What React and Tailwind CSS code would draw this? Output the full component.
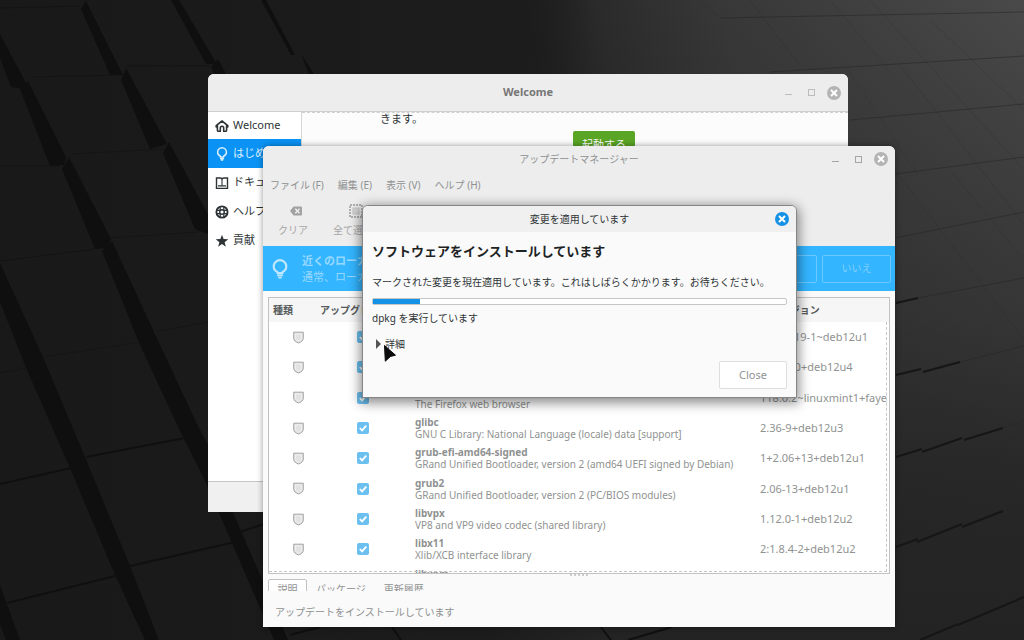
import { useState } from "react";
import clsx from "clsx";

const NAV = [
  { id: "welcome", label: "Welcome", icon: HomeIcon },
  { id: "first", label: "はじめに", icon: BulbIcon },
  { id: "docs", label: "ドキュメント", icon: BookIcon },
  { id: "help", label: "ヘルプ", icon: BuoyIcon },
  { id: "contribute", label: "貢献", icon: StarIcon },
];

const MENUS = ["ファイル (F)", "編集 (E)", "表示 (V)", "ヘルプ (H)"];

const UPDATES = [
  { name: "bind9", summary: "Internet Domain Name Server", version: "1:9.18.19-1~deb12u1" },
  { name: "cups", summary: "Common UNIX Printing System", version: "2.4.2-10+deb12u4" },
  { name: "firefox", summary: "The Firefox web browser", version: "118.0.2~linuxmint1+faye" },
  { name: "glibc", summary: "GNU C Library: National Language (locale) data [support]", version: "2.36-9+deb12u3" },
  { name: "grub-efi-amd64-signed", summary: "GRand Unified Bootloader, version 2 (amd64 UEFI signed by Debian)", version: "1+2.06+13+deb12u1" },
  { name: "grub2", summary: "GRand Unified Bootloader, version 2 (PC/BIOS modules)", version: "2.06-13+deb12u1" },
  { name: "libvpx", summary: "VP8 and VP9 video codec (shared library)", version: "1.12.0-1+deb12u2" },
  { name: "libx11", summary: "Xlib/XCB interface library", version: "2:1.8.4-2+deb12u2" },
  { name: "libxpm", summary: "X11 pixmap library", version: "1:3.5.12-1.1+deb12u1" },
];

function HomeIcon() {
  return (
    <svg viewBox="0 0 14 14" className="size-[14px]" fill="none" stroke="currentColor" strokeWidth="1.6" strokeLinejoin="round" strokeLinecap="round">
      <path d="M1.200 8V6.600L7 2l5.800 4.600V8M2.400 6.400v4.800c0 .8.500 1.100 1.100 1.100h1.800M11.600 6.400v4.800c0 .8-.5 1.100-1.100 1.100H8.700" />
      <path d="M5.300 12.300V9c0-1 .7-1.700 1.700-1.700S8.700 8 8.700 9v3.300" />
    </svg>
  );
}

function BulbIcon({ className = "size-[14px]" }) {
  return (
    <svg viewBox="0 0 14 14" className={className} fill="none" stroke="currentColor" strokeWidth="1.5">
      <path d="M5.200 9.900V9C3.700 8.300 2.600 7.200 2.600 5.200a4.400 4.400 0 0 1 8.800 0c0 2-1.100 3.100-2.600 3.800v.9z" strokeLinejoin="round" />
      <path d="M5 11.500h4M5.800 13h2.400" strokeWidth="1.300" />
    </svg>
  );
}

function BookIcon() {
  return (
    <svg viewBox="0 0 14 14" className="size-[14px]" fill="none" stroke="currentColor" strokeWidth="1.4">
      <path d="M1.500 12V2h3.700C6.300 2 7 2.600 7 3.400 7 2.600 7.700 2 8.800 2h3.700v10" />
      <path d="M7 3v7" strokeWidth="1.100" />
      <path d="M3 9.800h8M.8 12.300h12.400" strokeWidth="1.300" />
    </svg>
  );
}

function BuoyIcon() {
  return (
    <svg viewBox="0 0 14 14" className="size-[14px]" fill="none" stroke="currentColor">
      <circle cx="7" cy="7" r="5.600" strokeWidth="1.900" />
      <circle cx="7" cy="7" r="2.300" strokeWidth="1.400" />
      <path d="M5.200 1.500v3.800M8.800 1.500v3.800M5.200 8.700v3.800M8.800 8.700v3.800M1.500 5.300h3.700M1.500 8.700h3.700M8.800 5.300h3.700M8.800 8.700h3.700" strokeWidth="1.200" />
    </svg>
  );
}

function StarIcon() {
  return (
    <svg viewBox="0 0 14 14" className="size-[14px]" fill="currentColor">
      <path d="M7 .8l1.600 4.300 4.700.2-3.700 2.900 1.300 4.500L7 10.100l-3.900 2.600 1.300-4.500L.7 5.300l4.700-.2z" />
    </svg>
  );
}

function ShieldIcon() {
  return (
    <svg viewBox="0 0 12 14" className="mx-auto h-[13px] w-[11px]" fill="#e2e2e2" stroke="#9b9b9b" strokeWidth="1">
      <path d="M.8 1.200h10.400v6.600c0 2.600-2.200 4-5.200 5.200C3 11.800.8 10.400.8 7.800z" />
      <path d="M2.600 3h6.800v4.700c0 1.500-1.200 2.500-3.400 3.400-2.200-.9-3.400-1.900-3.400-3.400z" stroke="#f4f4f4" strokeWidth=".8" />
    </svg>
  );
}

function WindowControls({ active = false, dialog = false, className }) {
  return (
    <div className={clsx("flex items-center justify-end gap-[9px]", className)}>
      {!dialog && (
        <>
          <button type="button" aria-label="最小化" className="flex size-[14px] items-center justify-center">
            <span className="mt-1 h-px w-[7px] bg-current" />
          </button>
          <button type="button" aria-label="最大化" className="flex size-[14px] items-center justify-center">
            <span className="size-[7px] border border-current" />
          </button>
        </>
      )}
      <button
        type="button"
        aria-label="閉じる"
        className={clsx("flex size-[14px] items-center justify-center rounded-full text-white", active ? "bg-[#1592e6]" : "bg-[#b4b4b4]")}
      >
        <svg viewBox="0 0 8 8" className="size-2" stroke="currentColor" strokeWidth="2">
          <path d="M1 1l6 6M7 1L1 7" />
        </svg>
      </button>
    </div>
  );
}

function Wallpaper() {
  return (
    <svg viewBox="0 0 1024 640" preserveAspectRatio="xMidYMid slice" className="absolute inset-0 h-full w-full" aria-hidden="true">
      <defs>
        <linearGradient id="sheen" x1="530" y1="30" x2="1010" y2="-50" gradientUnits="userSpaceOnUse">
          <stop offset="0" stopColor="#1d1d1d" />
          <stop offset=".15" stopColor="#2b2b2b" />
          <stop offset=".4" stopColor="#383838" />
          <stop offset="1" stopColor="#494949" />
        </linearGradient>
        <linearGradient id="fade" x1="0" y1="0" x2="0" y2="1">
          <stop offset="0" stopColor="#242424" stopOpacity="0" />
          <stop offset=".25" stopColor="#242424" stopOpacity=".25" />
          <stop offset=".5" stopColor="#242424" stopOpacity=".5" />
          <stop offset=".75" stopColor="#242424" stopOpacity=".9" />
          <stop offset="1" stopColor="#232323" />
        </linearGradient>
        <linearGradient id="left" x1="0" y1="0" x2="1" y2="0">
          <stop offset="0" stopColor="#191919" />
          <stop offset=".48" stopColor="#1c1c1c" />
          <stop offset=".58" stopColor="#1c1c1c" stopOpacity="0" />
        </linearGradient>
      </defs>
      <rect width="1024" height="640" fill="url(#sheen)" />
      <rect width="1024" height="640" fill="url(#fade)" />
      <rect width="1024" height="640" fill="url(#left)" />
      <g fill="#0f0f0f">
        <path d="M86 1l37 74h-13L81 9z" />
        <path d="M126 68l41 76-17 5-29-69z" />
        <path d="M169 142l41 76v17l-15-6-32-76z" />
        <path d="M0 34l26 49-3 6-12-2L0 58z" />
        <path d="M28 81l38 76-2 8-14 1-30-77z" />
        <path d="M69 157l42 82-4 9-12 1-33-80z" />
        <path d="M112 241l42 91 43 92 13 25v42l-30-60-40-86-38-94z" />
        <path d="M171 0h8l38 64h-11z" />
        <path d="M218 59l8 15h-12l-3-7z" />
        <path d="M261 0h5l29 55h-4z" />
        <path d="M301 54l13 20h-5z" />
        <path d="M0 263l43 94 42 100 45 109 29 74h-14l-30-65-45-107-43-98-27-68z" />
        <path d="M0 585l20 55H6l-6-16z" />
        <path d="M203 445l35 79 50 116h-14l-45-104-26-60z" />
      </g>
      <g fill="none" stroke="#101010" strokeWidth="2">
        <path d="M0 484l80-18M86 457l104-20M130 566l105-24M7 603l112-28M240 532l24-8" />
        <path d="M600 626l11 14M628 640l44-13M392 627l9 13M290 635l30-8" />
      </g>
      <g fill="none" stroke="#121212" strokeOpacity=".7">
        <path d="M43 357l97-15M0 373l27-5M30 77l92-2M72 154l92-5M110 238l88-6M157 331l53-9M0 8l80-2M0 166h60M0 261l95-12M126 66h84" />
      </g>
      <g fill="none" stroke="#161616" strokeWidth="2">
        <path d="M896 303l22-5M896 375l25-6M923 372l37-10M896 457l26-8M922 452l40-14M964 440l39-12M896 547l22-8M917 542l45-18M962 527l41-16M920 640l38-16M958 625l66-28" />
      </g>
      <g fill="none" stroke="#262626" strokeOpacity=".55">
        <path d="M720 18l304-6M770 72l254-16M850 120l174-16M895 174l129-17M895 238l129-26M918 298l106-20M960 362l64-16M1003 428l21-7M1003 511l21-6" />
      </g>
      <g fill="none" stroke="#262626" strokeOpacity=".2">
        <path d="M700 0l20 18M750 0l50 66M830 0l60 72M870 0l154 170M930 20l94 90M848 70l70 105M900 65l124 160M895 170l129 170M950 170l74 90" />
      </g>
    </svg>
  );
}

function WelcomeWindow() {
  const [page, setPage] = useState("first");

  return (
    <section className="absolute top-[74px] left-[208px] flex h-[438px] w-[640px] flex-col overflow-hidden rounded-t-md bg-[#fcfcfc] text-[#2e3436]">
      <header className="grid h-[38px] shrink-0 grid-cols-[1fr_auto_1fr] items-center border-b border-[#cfcfcf] bg-[#ededed] px-[7px] text-[#777]">
        <h1 className="col-start-2 text-[11px] font-bold">Welcome</h1>
        <WindowControls className="text-[#bdbdbd]" />
      </header>
      <div className="flex flex-1">
        <nav className="w-[94px] border-r border-[#d6d6d6] bg-white">
          {NAV.map(({ id, label, icon: Icon }) => (
            <button
              key={id}
              type="button"
              onClick={() => setPage(id)}
              className={clsx(
                "flex h-[29px] w-full items-center gap-1 pl-[7px] text-[11px] whitespace-nowrap first:h-[27px]",
                page === id ? "bg-[#0a93f5] text-[#d9efff]" : "text-[#2e3436]"
              )}
            >
              <Icon />
              {label}
            </button>
          ))}
        </nav>
        <div className="flex-1 border-t border-dashed border-[#d0d0d0] pl-[78px]">
          <p className="text-[11px] leading-3">きます。</p>
          <button type="button" className="mt-[6px] ml-[193px] block h-7 w-[62px] rounded-xs bg-[#5ba526] text-[11px] text-white">
            起動する
          </button>
        </div>
      </div>
      <footer className="h-[31px] shrink-0 border-t border-[#c4c4c4] bg-[#f0f0f0]" />
    </section>
  );
}

function ToolButton({ label, children }) {
  return (
    <button type="button" disabled className="flex w-[60px] flex-col items-center gap-1 text-[10px] leading-4 text-[#a5a5a5]">
      <span className="pl-[6px]">{children}</span>
      {label}
    </button>
  );
}

function UpdateTable() {
  return (
    <div className="mx-[5px] mt-[6px] h-[277px] shrink-0 overflow-hidden border border-[#c2c2c2] bg-white">
      <div className="relative h-full overflow-hidden">
        <table className="h-[297px] w-full table-fixed text-left text-[#8f9291]">
          <thead>
            <tr className="h-6 bg-[#f6f6f6] text-[10px] text-[#555a5a]">
              <th className="w-[49px] pl-1">種類</th>
              <th className="w-[93px] pl-[2px] whitespace-nowrap">アップグレード</th>
              <th className="w-[345px] pl-1">名前</th>
              <th className="pl-1">新バージョン</th>
            </tr>
          </thead>
          <tbody className="leading-3">
            {UPDATES.map((u) => (
              <tr key={u.name}>
                <td className="pl-[9px]">
                  <ShieldIcon />
                </td>
                <td className="pr-1">
                  <label className="relative mx-auto block size-[12px]">
                    <input type="checkbox" defaultChecked aria-label={u.name} className="block size-[12px] appearance-none rounded-xs bg-[#6cc0ef]" />
                    <svg viewBox="0 0 12 12" className="pointer-events-none absolute inset-0" fill="none" stroke="#fff" strokeWidth="1.800">
                      <path d="M2.800 6l2.300 2.400 4.200-4.700" />
                    </svg>
                  </label>
                </td>
                <td className="pl-1 text-[10px] whitespace-nowrap">
                  <p className="font-bold">{u.name}</p>
                  <p>{u.summary}</p>
                </td>
                <td className="pl-1 text-[11px] whitespace-nowrap">{u.version}</td>
              </tr>
            ))}
          </tbody>
        </table>
        <div className="pointer-events-none absolute inset-x-0 top-6 bottom-px mr-[2px] border-r border-b border-dashed border-[#c6c6c6]" />
      </div>
    </div>
  );
}

function UpdateManager() {
  return (
    <section className="absolute top-[146px] left-[263px] flex h-[481px] w-[632px] flex-col overflow-hidden rounded-t-md bg-[#fafafa] shadow-[0_0_6px_rgba(0,0,0,0.4)]">
      <div className="h-[100px] shrink-0 bg-[#ededed] text-[#8f9191]">
        <header className="grid h-[26px] grid-cols-[1fr_auto_1fr] items-center px-[7px]">
          <h2 className="col-start-2 text-[10px]">アップデートマネージャー</h2>
          <WindowControls className="text-[#a5a5a5]" />
        </header>
        <nav className="flex h-[26px] items-center gap-[14px] pl-[7px] text-[10px]">
          {MENUS.map((m) => (
            <button key={m} type="button">{m}</button>
          ))}
        </nav>
        <div className="flex pt-[6px]">
          <ToolButton label="クリア">
            <svg viewBox="0 0 14 14" className="size-[14px]">
              <path d="M4.600 2.500h7.100c.8 0 1.300.5 1.300 1.300v6.400c0 .8-.5 1.300-1.300 1.300H4.600L1 7z" fill="#a2a2a2" />
              <path d="M6.300 4.800l4.200 4.400M10.500 4.800L6.300 9.200" stroke="#ededed" strokeWidth="1.500" />
            </svg>
          </ToolButton>
          <ToolButton label="全て選択">
            <svg viewBox="0 0 14 14" className="size-[14px]" fill="none" stroke="#999">
              <rect x="1" y="1" width="12" height="12" strokeDasharray="2 1" strokeWidth="1.400" />
              <rect x="4" y="4" width="6" height="6" fill="#d4d4d4" stroke="#c2c2c2" />
            </svg>
          </ToolButton>
        </div>
      </div>

      <div className="flex h-[45px] shrink-0 items-center bg-[#33b5ff] pr-1 pl-[7px] text-[#97d8ff]">
        <BulbIcon className="size-5 text-[#bfe7ff]" />
        <div className="flex-1 pl-3 text-[11px] leading-4 whitespace-nowrap">
          <p className="font-bold">近くのローカルミラーに切り替えますか？</p>
          <p>通常、ローカルミラーの方が高速です。</p>
        </div>
        <div className="flex gap-[5px] text-[10px] text-[#83cfff]">
          <button type="button" className="h-7 w-[69px] rounded-xs border border-[#6cc9ff]">はい</button>
          <button type="button" className="h-7 w-[69px] rounded-xs border border-[#6cc9ff]">いいえ</button>
        </div>
      </div>

      <UpdateTable />

      <div className="flex h-[5px] shrink-0 justify-center gap-[2px]">
        {[0, 1, 2, 3, 4].map((n) => (
          <span key={n} className="size-[2px] rounded-full bg-[#bdbdbd]" />
        ))}
      </div>
      <div className="mx-[5px] flex h-[12px] shrink-0 overflow-hidden text-[10px] leading-4 text-[#8f9191]">
        <button type="button" className="h-5 w-[39px] rounded-t-xs border border-[#c2c2c2] bg-white">説明</button>
        <button type="button" className="h-5 px-[9px]">パッケージ</button>
        <button type="button" className="h-5 px-[9px]">更新履歴</button>
      </div>
      <p className="flex flex-1 items-center pt-[6px] pl-3 text-[10px] text-[#8f9191]" role="status">
        アップデートをインストールしています
      </p>
    </section>
  );
}

function ProgressDialog({ percent }) {
  return (
    <section
      role="dialog"
      aria-labelledby="dialog-title"
      className="absolute top-[205px] left-[362px] flex h-[193px] w-[435px] flex-col overflow-hidden rounded-t-md border border-[#858585] bg-[#fafafa] text-[#2e3436] shadow-[0_3px_12px_2px_rgba(0,0,0,0.45)]"
    >
      <header className="grid h-[26px] shrink-0 grid-cols-[1fr_auto_1fr] items-center bg-[#f0f0f0] px-[7px]">
        <h2 id="dialog-title" className="col-start-2 text-[10px]">変更を適用しています</h2>
        <WindowControls active dialog />
      </header>
      <div className="flex flex-1 flex-col px-[9px] pb-2 text-[10px] leading-4 whitespace-nowrap">
        <h3 className="mt-[11px] text-[13px] font-bold text-[#1d2324]">ソフトウェアをインストールしています</h3>
        <p className="mt-[15px]">マークされた変更を現在適用しています。これはしばらくかかります。お待ちください。</p>
        <div
          role="progressbar"
          aria-valuenow={percent}
          aria-valuemin={0}
          aria-valuemax={100}
          className="mt-2 h-[7px] shrink-0 rounded-xs border border-[#c6c6c6] bg-white"
        >
          <div className="h-[5px] bg-[#1592e6]" style={{ width: `${percent}%` }} />
        </div>
        <p className="mt-[5px]">dpkg を実行しています</p>
        <details className="mt-[10px]">
          <summary className="flex w-max list-none items-center gap-1 pl-1">
            <svg viewBox="0 0 5 10" className="h-[10px] w-[5px]" fill="#555">
              <path d="M0 0l5 5-5 5z" />
            </svg>
            詳細
          </summary>
        </details>
        <button type="button" disabled className="mt-auto ml-auto h-7 w-[68px] rounded-xs border border-[#dedede] bg-white text-[11px] text-[#909494]">
          Close
        </button>
      </div>
    </section>
  );
}

function Cursor() {
  return (
    <svg viewBox="0 0 12 17" className="pointer-events-none absolute top-[345px] left-[384px] h-[17px] w-3" fill="#0b0b0b" aria-hidden="true">
      <path d="M.5.500l11 9.700-5 1.200-5.200 4.800z" stroke="#0b0b0b" strokeLinejoin="round" />
    </svg>
  );
}

export default function App() {
  return (
    <main className="relative h-screen overflow-hidden bg-[#1b1b1b] font-['Noto_Sans','Noto_Sans_CJK_JP',sans-serif]" lang="ja">
      <Wallpaper />
      <WelcomeWindow />
      <UpdateManager />
      <ProgressDialog percent={11.5} />
      <Cursor />
    </main>
  );
}
